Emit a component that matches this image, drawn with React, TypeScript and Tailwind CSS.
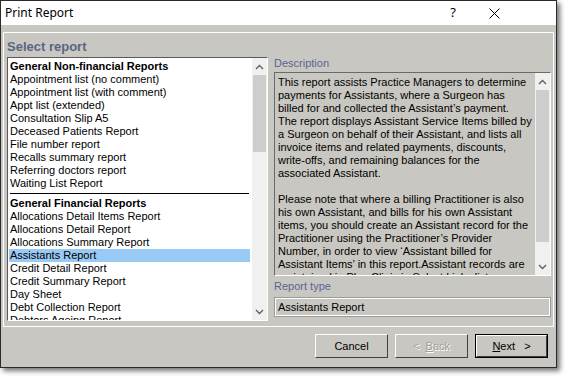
import React from 'react';

const nonFinancial = [
  'Appointment list (no comment)',
  'Appointment list (with comment)',
  'Appt list (extended)',
  'Consultation Slip A5',
  'Deceased Patients Report',
  'File number report',
  'Recalls summary report',
  'Referring doctors report',
  'Waiting List Report',
];

const financial = [
  'Allocations Detail Items Report',
  'Allocations Detail Report',
  'Allocations Summary Report',
  'Assistants Report',
  'Credit Detail Report',
  'Credit Summary Report',
  'Day Sheet',
  'Debt Collection Report',
  'Debtors Ageing Report',
];

const description = [
  'This report assists Practice Managers to determine',
  'payments for Assistants, where a Surgeon has',
  'billed for and collected the Assistant\u2019s payment.',
  'The report displays Assistant Service Items billed by',
  'a Surgeon on behalf of their Assistant, and lists all',
  'invoice items and related payments, discounts,',
  'write-offs, and remaining balances for the',
  'associated Assistant.',
  '',
  'Please note that where a billing Practitioner is also',
  'his own Assistant, and bills for his own Assistant',
  'items, you should create an Assistant record for the',
  'Practitioner using the Practitioner\u2019s Provider',
  'Number, in order to view \u2018Assistant billed for',
  'Assistant Items\u2019 in this report.Assistant records are',
  'maintained in Plus Clinic in Select Links list.',
];

const font = { fontFamily: '"Liberation Sans", Arial, sans-serif' };

function Chevron({ up }: { up?: boolean }) {
  return (
    <svg width="9" height="6" viewBox="0 0 9 6">
      <polyline
        points={up ? '1,5 4.5,1.5 8,5' : '1,1 4.5,4.5 8,1'}
        fill="none"
        stroke="#606060"
        strokeWidth="1.4"
      />
    </svg>
  );
}

function ScrollBar({ thumbTop, thumbHeight }: { thumbTop: number; thumbHeight: number }) {
  return (
    <div className="flex w-[15px] shrink-0 flex-col bg-[#f0f0f0]">
      <div className="flex h-[17px] items-center justify-center">
        <Chevron up />
      </div>
      <div className="flex-1">
        <div className="mx-[1px] bg-[#cdcdcd]" style={{ marginTop: thumbTop, height: thumbHeight }} />
      </div>
      <div className="flex h-[17px] items-center justify-center">
        <Chevron />
      </div>
    </div>
  );
}

function Row({ label, bold, selected }: { label: string; bold?: boolean; selected?: boolean }) {
  return (
    <div
      className={`h-[13px] whitespace-nowrap pl-[1px] text-[11px] leading-[13px] text-black ${
        bold ? 'font-bold' : ''
      } ${selected ? 'bg-[#99c9f5]' : ''}`}
    >
      {label}
    </div>
  );
}

function Button({ children, primary, disabled }: { children: React.ReactNode; primary?: boolean; disabled?: boolean }) {
  return (
    <div className={`flex h-[24px] w-[73px] items-center justify-center ${primary ? 'border border-black' : ''}`}>
      <div
        className={`flex h-full w-full items-center justify-center border border-t-white border-l-white border-b-[#404040] border-r-[#404040] bg-[#c9c7c1] text-[11px] ${
          disabled ? 'text-[#a0a0a0] [text-shadow:1px_1px_0_#ffffff]' : 'text-black'
        }`}
      >
        {children}
      </div>
    </div>
  );
}

export default function App() {
  return (
    <div className="h-[376px] w-[565px] overflow-hidden bg-white" style={font}>
      <div className="flex h-[368px] w-[557px] flex-col border border-[#2a2a2a] shadow-[3px_3px_5px_rgba(0,0,0,0.55)]">
        {/* title bar */}
        <div className="flex h-[24px] shrink-0 items-center bg-white">
          <span
            className="pl-[4px] text-[12px] text-black"
            style={{ fontFamily: '"Segoe UI", "Noto Sans", "Liberation Sans", sans-serif' }}
          >
            Print Report
          </span>
          <span className="ml-auto text-[13px] text-black" style={{ fontFamily: '"Noto Sans", sans-serif' }}>
            ?
          </span>
          <div className="ml-[33px] mr-[56px] flex items-center">
            <svg width="11" height="11" viewBox="0 0 11 11">
              <path d="M0.5 0.5 L10.5 10.5 M10.5 0.5 L0.5 10.5" stroke="#000" strokeWidth="1" />
            </svg>
          </div>
        </div>

        {/* body */}
        <div className="flex flex-1 flex-col bg-[#c9c7c1] px-[2px] pt-[7px]">
          <div className="flex h-[295px] flex-col border border-white">
            <div className="flex h-[24px] items-end pb-[2px] pl-[3px] text-[13px] font-bold leading-[16px] text-[#5a6584]">
              Select report
            </div>
            <div className="flex gap-[6px] pl-[3px] pr-[2px]">
              {/* list box */}
              <div className="flex h-[264px] w-[261px] border border-t-[#5a5a5a] border-l-[#5a5a5a] border-b-white border-r-white bg-white">
                <div className="flex-1 overflow-hidden pl-[1px] pt-[2px]">
                  <Row label="General Non-financial Reports" bold />
                  {nonFinancial.map((r) => (
                    <Row key={r} label={r} />
                  ))}
                  <div className="flex h-[7px] items-center px-[1px]">
                    <div className="h-[1px] w-full bg-black" />
                  </div>
                  <Row label="General Financial Reports" bold />
                  {financial.map((r) => (
                    <Row key={r} label={r} selected={r === 'Assistants Report'} />
                  ))}
                </div>
                <div className="w-[2px] shrink-0" />
                <ScrollBar thumbTop={0} thumbHeight={77} />
              </div>

              {/* right column */}
              <div className="flex flex-1 flex-col">
                <div className="h-[15px] text-[11px] leading-[13px] text-[#5a6594]">Description</div>
                <div className="flex h-[204px] border border-t-[#6a6a6a] border-l-[#6a6a6a] border-b-white border-r-white bg-[#c9c7c1]">
                  <div className="flex-1 overflow-hidden pl-[3px] pt-[3px]">
                    {description.map((l, i) => (
                      <div key={i} className="h-[13px] whitespace-nowrap text-[11px] leading-[13px] text-black">
                        {l}
                      </div>
                    ))}
                  </div>
                  <ScrollBar thumbTop={0} thumbHeight={152} />
                </div>
                <div className="h-[21px] pt-[4px] text-[11px] leading-[13px] text-[#5a6594]">Report type</div>
                <div className="h-[20px] border border-[#9a9a9a]">
                  <div className="flex h-full items-center border border-white pl-[2px] text-[11px] text-black">
                    Assistants Report
                  </div>
                </div>
              </div>
            </div>
          </div>

          <div className="flex justify-end gap-[7px] pr-[6px] pt-[7px]">
            <Button>Cancel</Button>
            <Button disabled>
              &lt;&nbsp;&nbsp;<span className="underline">B</span>ack
            </Button>
            <Button primary>
              <span className="underline">N</span>ext&nbsp;&nbsp;&nbsp;&gt;
            </Button>
          </div>
        </div>
      </div>
    </div>
  );
}
